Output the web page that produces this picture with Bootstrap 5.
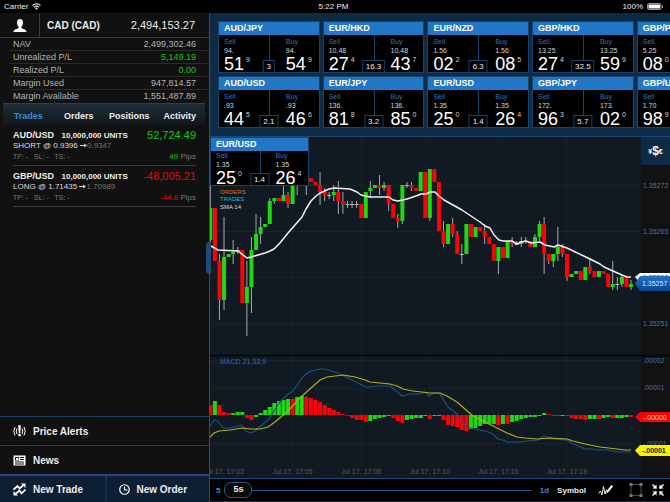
<!DOCTYPE html>
<html lang="en">
<head>
<meta charset="utf-8">
<meta name="viewport" content="width=device-width, initial-scale=1">
<title>Trading</title>
<link href="https://cdn.jsdelivr.net/npm/bootstrap@5.3.0/dist/css/bootstrap.min.css" rel="stylesheet">
<style>
  :root { --line: #1b4367; --navy: #0e2a45; --head: #2176c5; --ink: #111; }
  body { font: 9px/13px "Liberation Sans", Arial, sans-serif; background: #000; color: #ececec; }
  button { font: inherit; color: inherit; background: none; border: 0; padding: 0; }
  .status-bar { height: 13px; font-size: 8px; line-height: 13px; padding: 0 7px 0 4px; display: grid; grid-template-columns: 1fr auto 1fr; }
  .side { width: 210px; background: var(--ink); border-right: 1px solid #22517f; }
  .account { height: 25px; border-bottom: 1px solid var(--line); font-size: 10px; }
  .balance { padding: 0 14px 0 7px; }
  .balance span { font-size: 11px; }
  .avatar { width: 40px; border-right: 1px solid var(--line); }
  .sums { margin: 0 0 0 10px; padding: 0; color: #b4b4b4; }
  .sums > div { height: 13px; padding: 0 13px 0 3px; border-bottom: 1px solid #2a2a2a; line-height: 13px; }
  .sums > div:last-child { border-bottom: 0; }
  .sums dt, .sums dd { font-weight: 400; margin: 0; }
  .up { color: #12c912; }
  .down { color: #e8050a; }
  .tab-row { height: 22px; margin: 0 4px 0 3px; padding-top: 3px; border-top: 1px solid var(--line); background: linear-gradient(#1c2c38, #12181d); font-weight: 700; }
  .tab-row button { flex: 1 1 0; text-align: center; }
  .tab-row .on { color: #3d8bd6; }
  .trade { margin: 0 13px; height: 41px; padding-top: 4px; border-bottom: 1px solid #3c3c3c; }
  .trade-top { height: 12px; line-height: 12px; font-weight: 700; }
  .trade-top small { font-size: 8px; margin-left: 5px; }
  .trade-top .amount { font-size: 11px; font-weight: 400; }
  .trade-mid { font-size: 8px; line-height: 10px; color: #ddd; }
  .trade-mid svg { vertical-align: 0; }
  .trade-low { font-size: 7px; line-height: 11px; color: #777; }
  .trade-low .pips { font-size: 8px; }
  .dim { color: #777; }
  .menu-row { height: 29px; padding-left: 13px; gap: 7px; border-top: 1px solid var(--line); font-size: 10px; font-weight: 700; text-align: left; }
  .menu-row svg, .foot svg { width: 13px; height: 13px; }
  .foot { height: 28px; background: #0d1f33; border-top: 2px solid #1e4a78; font-size: 10px; font-weight: 700; }
  .foot button { padding: 0 0 0 13px; gap: 7px; text-align: left; }
  .foot button + button { border-left: 2px solid #143150; padding-left: 11px; gap: 6px; }
  .panel { min-width: 0; }
  .quotes { background: linear-gradient(#0e2942, #0f2d4a); height: 124px; padding: 8px 0 0 8px; border-bottom: 1px solid #1c4a75; overflow: hidden; display: grid; grid-template-rows: 52px 52px; grid-auto-flow: column; grid-auto-columns: 22.5%; gap: 3px; align-content: start; }
  .quote { background: #000; border: 1px solid #17436c; height: 52px; position: relative; overflow: hidden; }
  .quote-name { background: var(--head); height: 13px; font-size: 9px; line-height: 13px; padding-left: 5px; font-weight: 700; color: #fff; margin: 0; }
  .side-price { padding: 2px 0 0 5px; line-height: 9px; font-size: 7px; color: #d4d4d4; text-align: left; }
  .side-price em { display: block; font-style: normal; color: #3474ae; }
  .side-price b { font-size: 18px; line-height: 18px; font-weight: 400; color: #fff; }
  .side-price sup { font-size: 7px; top: -8px; margin-left: 2px; line-height: 0; }
  .side-price + .side-price { border-left: 1px solid #17436c; padding-left: 16px; }
  .spread { position: absolute; left: 50%; bottom: 0; transform: translateX(-50%); background: #000; border: 1px solid #17436c; border-bottom: 0; padding: 0 3px; font-size: 8px; line-height: 12px; height: 12px; }
  .chart { background: #111a22; min-height: 0; }
  .chart svg { display: block; }
  .chart text { font: 7px "Liberation Sans", Arial, sans-serif; }
  .chart .legend { font-size: 6px; }
  .chart .strong { font-weight: 700; }
  .live { position: absolute; left: 0; top: 0; width: 99px; }
  .live .quote { height: 49px; }
  .live .side-price { padding-top: 0; }
  .live .side-price + .side-price { padding-left: 15px; }
  .money { position: absolute; right: 0; top: 0; width: 29px; height: 28px; background: var(--navy); color: #fff; font-weight: 700; font-size: 7px; }
  .money span { font-size: 12px; vertical-align: -1px; }
  .handle { position: absolute; left: -4px; top: 105px; width: 5px; height: 32px; background: #1d4c7b; border-radius: 4px 0 0 4px; }
  .tools { height: 24px; background: #000; border-top: 1px solid #1e4a78; border-bottom: 1px solid #143150; padding: 0 5px 0 6px; font-size: 8px; font-weight: 700; }
  .tools .blue { color: #3d8bd6; }
  .zoomer { appearance: none; height: 18px; background: none; margin: 0; min-width: 0; display: block; width: 100%; }
  .zoomer::-webkit-slider-runnable-track { height: 1px; background: #23598c; }
  .zoomer::-webkit-slider-thumb { appearance: none; width: 28px; height: 16px; margin-top: -8px; border: 1px solid #23598c; border-radius: 7px; background: #0a0a0a; }
  .knob-text { position: absolute; left: 0; top: 2px; width: 28px; text-align: center; font-size: 9px; pointer-events: none; }
</style>
<script src="https://cdn.jsdelivr.net/npm/bootstrap@5.3.0/dist/js/bootstrap.bundle.min.js"></script>
</head>
<body class="d-flex flex-column vh-100 overflow-hidden">
<header class="status-bar flex-shrink-0">
  <span class="d-flex align-items-center gap-1">Carrier
    <svg width="9" height="7" viewBox="0 0 18 14" fill="none" stroke="#ddd" stroke-width="2.2"><path d="M1 5a11.500 11.500 0 0 1 16 0M4 8.500a7.500 7.500 0 0 1 10 0"/><path d="M9 13.500l-3-3a4.500 4.500 0 0 1 6 0z" fill="#ddd" stroke="none"/></svg>
  </span>
  <span>5:22 PM</span>
  <span class="d-flex align-items-center justify-content-end gap-1">100%
    <svg width="16" height="7" viewBox="0 0 16 7"><rect x=".5" y=".5" width="13.500" height="6" rx="1.500" fill="none" stroke="#999"/><rect x="1.500" y="1.500" width="11.500" height="4" fill="#fff"/><path d="M15 2v3q1-.5 1-1.500t-1-1.500" fill="#bbb"/></svg>
  </span>
</header>
<div class="d-flex flex-grow-1 overflow-hidden">
  <aside class="side d-flex flex-column flex-shrink-0">
    <div class="account d-flex align-items-stretch">
      <button class="avatar" aria-label="Account"><svg width="14" height="13" viewBox="0 0 28 26" fill="#fff"><path d="M14 0c4 0 6 3 6 7 0 3-1 6-3 8v3c2 2 10 2 10 8H1c0-6 8-6 10-8v-3c-2-2-3-5-3-8 0-4 2-7 6-7z"/></svg></button>
      <div class="balance d-flex flex-grow-1 justify-content-between align-items-center"><strong>CAD (CAD)</strong><span>2,494,153.27</span></div>
    </div>
    <dl class="sums">
      <div class="d-flex justify-content-between"><dt>NAV</dt><dd>2,499,302.46</dd></div>
      <div class="d-flex justify-content-between"><dt>Unrealized P/L</dt><dd class="up">5,149.19</dd></div>
      <div class="d-flex justify-content-between"><dt>Realized P/L</dt><dd class="up">0.00</dd></div>
      <div class="d-flex justify-content-between"><dt>Margin Used</dt><dd>947,814.57</dd></div>
      <div class="d-flex justify-content-between"><dt>Margin Available</dt><dd>1,551,487.89</dd></div>
    </dl>
    <nav class="tab-row d-flex align-items-center">
      <button class="on fw-bold">Trades</button><button class="fw-bold">Orders</button><button class="fw-bold">Positions</button><button class="fw-bold">Activity</button>
    </nav>
    <section class="trade">
      <div class="trade-top d-flex justify-content-between"><span>AUD/USD <small class="fw-bold">10,000,000 UNITS</small></span><span class="amount up">52,724.49</span></div>
      <div class="trade-mid">SHORT @ 0.9396 <svg width="7" height="5" viewBox="0 0 14 10"><path d="M0 4h8V1l6 4-6 4V6H0z" fill="#ddd"/></svg><span class="dim">0.9347</span></div>
      <div class="trade-low d-flex justify-content-between"><span>TP: - &nbsp; SL: - &nbsp; TS: -</span><span class="pips"><span class="up">49</span> Pips</span></div>
    </section>
    <section class="trade">
      <div class="trade-top d-flex justify-content-between"><span>GBP/USD <small class="fw-bold">10,000,000 UNITS</small></span><span class="amount down">-48,005.21</span></div>
      <div class="trade-mid">LONG @ 1.71435 <svg width="7" height="5" viewBox="0 0 14 10"><path d="M0 4h8V1l6 4-6 4V6H0z" fill="#ddd"/></svg><span class="dim">1.70989</span></div>
      <div class="trade-low d-flex justify-content-between"><span>TP: - &nbsp; SL: - &nbsp; TS: -</span><span class="pips"><span class="down">-44.6</span> Pips</span></div>
    </section>
    <button class="menu-row d-flex align-items-center mt-auto">
      <svg viewBox="0 0 26 26" fill="none" stroke="#fff" stroke-width="2"><path d="M4 4q-5 8 0 17M8 7q-3 5 0 11M22 4q5 8 0 17M18 7q3 5 0 11"/><path d="M11 1h4l-1 15h-2zM11 18h4v4h-4z" fill="#fff" stroke="#fff" stroke-width="1"/></svg>Price Alerts</button>
    <button class="menu-row d-flex align-items-center">
      <svg viewBox="0 0 26 26"><path fill="#fff" fill-rule="evenodd" d="M1 3h24v20H1zM4 6v7h8V6zM14 6v2h8V6zM14 10v2h8v-2zM4 15v2h18v-2zM4 19v2h18v-2z"/><path fill="#fff" d="M6 8h5v4H6z"/></svg>News</button>
    <div class="foot d-flex">
      <button class="d-flex align-items-center w-50"><svg viewBox="0 0 26 26"><path d="M1 13l8-7 4 5 7-6M25 13l-8 8-4-6-7 6" fill="none" stroke="#fff" stroke-width="3.500"/><path d="M16 1h9v9zM1 16v9h9z" fill="#fff"/></svg>New Trade</button>
      <button class="d-flex align-items-center w-50"><svg viewBox="0 0 26 26" fill="none" stroke="#fff" stroke-width="2.400"><circle cx="13" cy="13" r="9.500"/><path d="M13 7v7h6"/></svg>New Order</button>
    </div>
  </aside>
  <main class="panel d-flex flex-column flex-grow-1">
    <section class="quotes flex-shrink-0" id="quotes"></section>
    <section class="chart position-relative flex-grow-1">
      <svg class="w-100 h-100" viewBox="210 137 460 341" preserveAspectRatio="xMinYMin meet" id="plot" role="img" aria-label="EUR/USD price and MACD"></svg>
      <div class="live" id="live"></div>
      <button class="money" aria-label="Currencies">¥<span>$</span>€</button>
      <button class="handle" aria-label="Collapse sidebar"></button>
    </section>
    <footer class="tools d-flex align-items-center flex-shrink-0">
      <label class="blue" for="span">5</label>
      <div class="position-relative flex-grow-1 ms-1"><input class="zoomer" id="span" type="range" min="0" max="10" value="0"><span class="knob-text">5s</span></div>
      <span class="blue mx-2">1d</span>
      <button class="fw-bold me-2 pe-1">Symbol</button>
      <button class="me-3" aria-label="Draw"><svg class="d-block" width="15" height="12" viewBox="0 0 30 24" fill="none" stroke="#fff" stroke-width="1.800"><path d="M1 19l4-5 3 8L11 5l3 15 3-9"/><path d="M16 19l2-6L27 2l3 3-9 11z" fill="#fff" stroke="none"/></svg></button>
      <button class="me-2" aria-label="Frame"><svg class="d-block" width="14" height="14" viewBox="0 0 28 28" fill="#777"><path d="M4 3h20v22H4z" fill="none" stroke="#666" stroke-width="1.500"/><path d="M1 0h6v6H1zM21 0h6v6h-6zM1 22h6v6H1zM21 22h6v6h-6z"/></svg></button>
      <button aria-label="Full screen"><svg class="d-block" width="14" height="14" viewBox="0 0 28 28" fill="#fff" stroke="#fff" stroke-width="3"><path d="M3 3l8 8M25 3l-8 8M3 25l8-8M25 25l-8-8"/><path stroke="none" d="M3 11l8-8v8zM25 11l-8-8v8zM3 17l8 8v-8zM25 17l-8 8v-8z"/></svg></button>
    </footer>
  </main>
</div>
<script>
const tile = ([name, sell, s, sp, buy, b, bp, spread]) => `<article class="quote"><h2 class="quote-name">${name}</h2>
  <div class="d-flex h-100"><div class="side-price w-50"><em>Sell</em>${sell}<br><b>${s}</b><sup>${sp}</sup></div>
  <div class="side-price w-50"><em>Buy</em>${buy}<br><b>${b}</b><sup>${bp}</sup></div></div><span class="spread">${spread}</span></article>`;
const quotes = [
  ['AUD/JPY','94.','51',9,'94.','54',9,'3'], ['AUD/USD','.93','44',5,'.93','46',6,'2.1'],
  ['EUR/HKD','10.48','27',4,'10.48','43',7,'16.3'], ['EUR/JPY','136.','81',8,'136.','85',0,'3.2'],
  ['EUR/NZD','1.56','02',2,'1.56','08',5,'6.3'], ['EUR/USD','1.35','25',0,'1.35','26',4,'1.4'],
  ['GBP/HKD','13.25','27',4,'13.25','59',9,'32.5'], ['GBP/JPY','172.','96',3,'173.','02',0,'5.7'],
  ['GBP/PLN','5.25','08',0,'5.25','12',0,'4.0'], ['GBP/USD','1.70','98',9,'1.70','99',2,'2.0']];
document.getElementById('quotes').innerHTML = quotes.map(tile).join('');
document.getElementById('live').innerHTML = tile(quotes[5]);

// index, colour, body top, body bottom, wick top, wick bottom
const candles = `0g 208 240 185 273|1r 208 261|2r 261 300 254 320|3g 257 300 217 310|4g 254 257|5g 252 254 240 264|6w 250 251 247 254|7r 250 303|8g 287 303 261 336|9g 250 287 237 313|10g 234 250 214 250|11g 227 234 217 244|12g 224 227|13g 201 224 198 224|14g 198 201 198 204|15r 198 201|16g 195 201 185 201|17r 195 204 192 208|18g 185 204|19w 185 185 185 195|21w 185 185 185 195|22r 178 182|23r 182 185|24r 185 192 172 205|25r 192 195 188 201|26w 195 196 192 199|27g 192 195 185 201|28r 192 201 181 214|29r 201 204 192 214|30w 204 205 201 208|31w 204 205 201 208|32w 204 205 201 208|33r 204 218|34g 192 218|35g 188 191 181 198|36g 185 188|37r 185 188 175 195|38g 185 188 182 191|39r 185 204 185 211|40r 204 218|41r 218 221 214 228|42g 185 221 185 224|43w 185 186 182 188|44r 185 188 182 191|45r 188 191|46g 172 191|47r 172 218|48g 169 218 169 221|49r 169 182|50r 182 231|51r 231 244 221 247|52g 224 244|53r 224 234 218 237|54r 234 254 231 254|55w 254 255 244 264|56g 224 254|57r 224 237|58g 227 237|59r 227 231|60r 231 237 224 244|61r 237 244|62r 244 261|63g 247 261 247 274|64r 247 258|65g 241 258|66r 241 244 237 247|67w 244 245 241 244|68g 241 244 237 247|69w 241 242 237 244|70r 241 247|71g 237 247 234 247|72g 224 237 221 241|73r 224 254 217 274|74r 254 261 254 264|75g 254 261 254 267|76g 247 254 227 261|77r 247 254 244 257|78r 254 277 254 281|79g 274 277|80g 271 274|81r 271 280|82g 267 280|83r 267 271 258 274|84r 271 277|85g 271 277|86r 271 274|87r 274 287|88g 284 287 261 290|89w 284 285 277 290|90g 277 284 275 287|91r 277 287|92g 284 287 280 290`;
// histogram heights from the zero line; a plus sign means above it
const hist = 'r+10 g+14 r+10 r+3 r+2 g+2 g+3 g+3 r-3 r-5 g-2 g+2 g+5 g+8 g+12 g+14 g+15 g+16 r+16 g+18 g+19 r+18 r+17 r+15 r+13 r+10 r+7 r+5 r+3 r+1 r-1 r-3 r-5 r-5 r-7 g-6 g-4 g-3 g-2 g-1 r-3 r-6 r-8 g-5 g-4 g-3 g-3 g-1 r-4 g-1 g-1 r-5 r-10 r-11 r-12 r-15 r-16 g-14 g-13 g-11 g-9 g-9 g-9 r-10 g-9 r-9 g-7 g-6 g-4 g-3 g-2 g-2 g-1 g+2 r+1 r-1 r-1 g-1 r-1 r-3 r-4 r-4 r-5 g-4 g-4 r-4 g-3 g-2 r-3 g-3 g-3 g-2 r-2'.split(' ');
const sma = '211,246 218,250 238,251 247,258 251,257 265,253 270,251 274,249 279,244 284,238 288,233 302,217 306,209 311,201 316,196 320,193 329,189 334,188 350,189 357,192 361,195 370,197 389,197 393,200 398,201 407,199 416,196 421,194 426,194 430,192 435,192 439,196 444,200 453,205 462,210 471,216 480,222 485,226 490,228 494,235 499,240 503,241 512,241 517,244 521,242 526,241 531,243 540,242 545,245 554,247 558,245 567,248 590,259 600,264 604,267 613,271 622,275 627,277 631,277';
const fast = '210,426 214,420 218,421 223,428 230,428 242,425 246,431 251,433 255,431 270,418 279,403 288,394 293,391 302,378 306,374 311,371 316,370 320,369 325,369 338,373 350,379 360,384 366,387 370,387 377,386 390,386 394,389 402,396 410,394 420,394 425,392 429,396 434,393 439,393 443,399 448,407 457,414 462,421 466,427 475,429 485,431 493,434 498,439 503,440 507,442 520,442 527,441 538,440 544,436 553,439 567,440 573,444 581,447 585,449 592,449 598,450 608,450 617,452 631,452';
const slow = '210,437 214,433 219,431 230,430 242,428 251,429 260,429 268,427 275,422 288,411 302,396 311,388 320,380 327,377 335,376 343,375 355,377 365,380 370,382 380,383 390,384 397,386 403,389 413,391 430,393 440,393 447,396 457,402 473,416 483,421 493,426 507,433 517,437 525,438 537,439 550,438 567,439 573,441 585,444 600,447 617,449 625,450 631,450';
const X = i => 210.3 + i * 4.573, tint = { g: '#1fd811', r: '#fb0207', w: '#b9bdc0' };
let s = '';
[3, 18, 33, 48, 63, 78].forEach(i => s += `<path d="M${X(i)} 137V466" stroke="#15232c"/>`);
[185, 231, 277, 323, 360, 388, 443].forEach(y => s += `<path d="M210 ${y}.500H641" stroke="#15232c"/>`);
s += '<rect x="641" y="137" width="29" height="341" fill="#121212"/><path d="M210 355.500H670" stroke="#020509" stroke-width="1.500"/>';
candles.split('|').forEach(c => {
  const [k, a, b, u, d] = c.split(' '), x = X(parseInt(k)), col = k.slice(-1);
  if (u) s += `<path d="M${x} ${u}V${d}" stroke="#a4a8ab"/>`;
  if (b > a) s += `<rect x="${x - 2}" y="${a}" width="4" height="${b - a}" fill="${tint[col]}"/>`;
});
hist.forEach((h, i) => {
  const n = Math.abs(+h.slice(1));
  s += `<rect x="${X(i) - 2}" y="${h[1] == '+' ? 415 - n : 415}" width="4" height="${n}" fill="${tint[h[0]]}"/>`;
});
const line = (p, c, w) => `<polyline points="${p}" fill="none" stroke="${c}" stroke-width="${w}" stroke-linejoin="round"/>`;
s += line(sma, '#f2f2f2', 1.5) + line(fast, '#1c528a', 1.1) + line(slow, '#b5b01c', 1.1);
const t = (x, y, str, c, extra = '') => `<text x="${x}" y="${y}" fill="${c}" ${extra}>${str}</text>`;
s += t(220, 194, 'ORDERS', '#d8701c', 'class="legend"') + t(220, 201, 'TRADES', '#17bfc0', 'class="legend"') + t(220, 209, 'SMA 14', '#ddd', 'class="legend"') + t(220, 364, 'MACD 21,33,9', '#2a6db0');
['02', '05', '08', '10', '15', '18'].forEach((m, n) => s += t(X(3 + 15 * n), 474, 'Jul 17, 17:' + m, '#555b60', 'text-anchor="middle"'));
[['1.35272', 188], ['1.35265', 234], ['1.35251', 326], ['.00002', 363], ['.00001', 390], ['-.00001', 446]].forEach(([v, y]) => s += t(643, y, v, '#3a76b0'));
s += '<path d="M635 277l5-4h30v10h-30z" fill="#fff"/>' + t(643, 280, '1.35260', '#333');
s += '<defs><linearGradient id="bl" x2="0" y2="1"><stop stop-color="#2173c9"/><stop offset="1" stop-color="#0a4593"/></linearGradient></defs><path d="M635 283.500l5-7.500h30v15h-30z" fill="url(#bl)"/>' + t(642, 286, '1.35257', '#dbe6f2');
s += '<path d="M635 417l5-5h30v10h-30z" fill="#f90307"/>' + t(643, 420, '-.00000', '#ffd0d0');
s += '<path d="M635 450.500l5-5.500h30v11h-30z" fill="#f8f303"/>' + t(642, 453, '-.00001', '#222', 'class="strong"');
document.getElementById('plot').innerHTML = s;
</script>
</body>
</html>
